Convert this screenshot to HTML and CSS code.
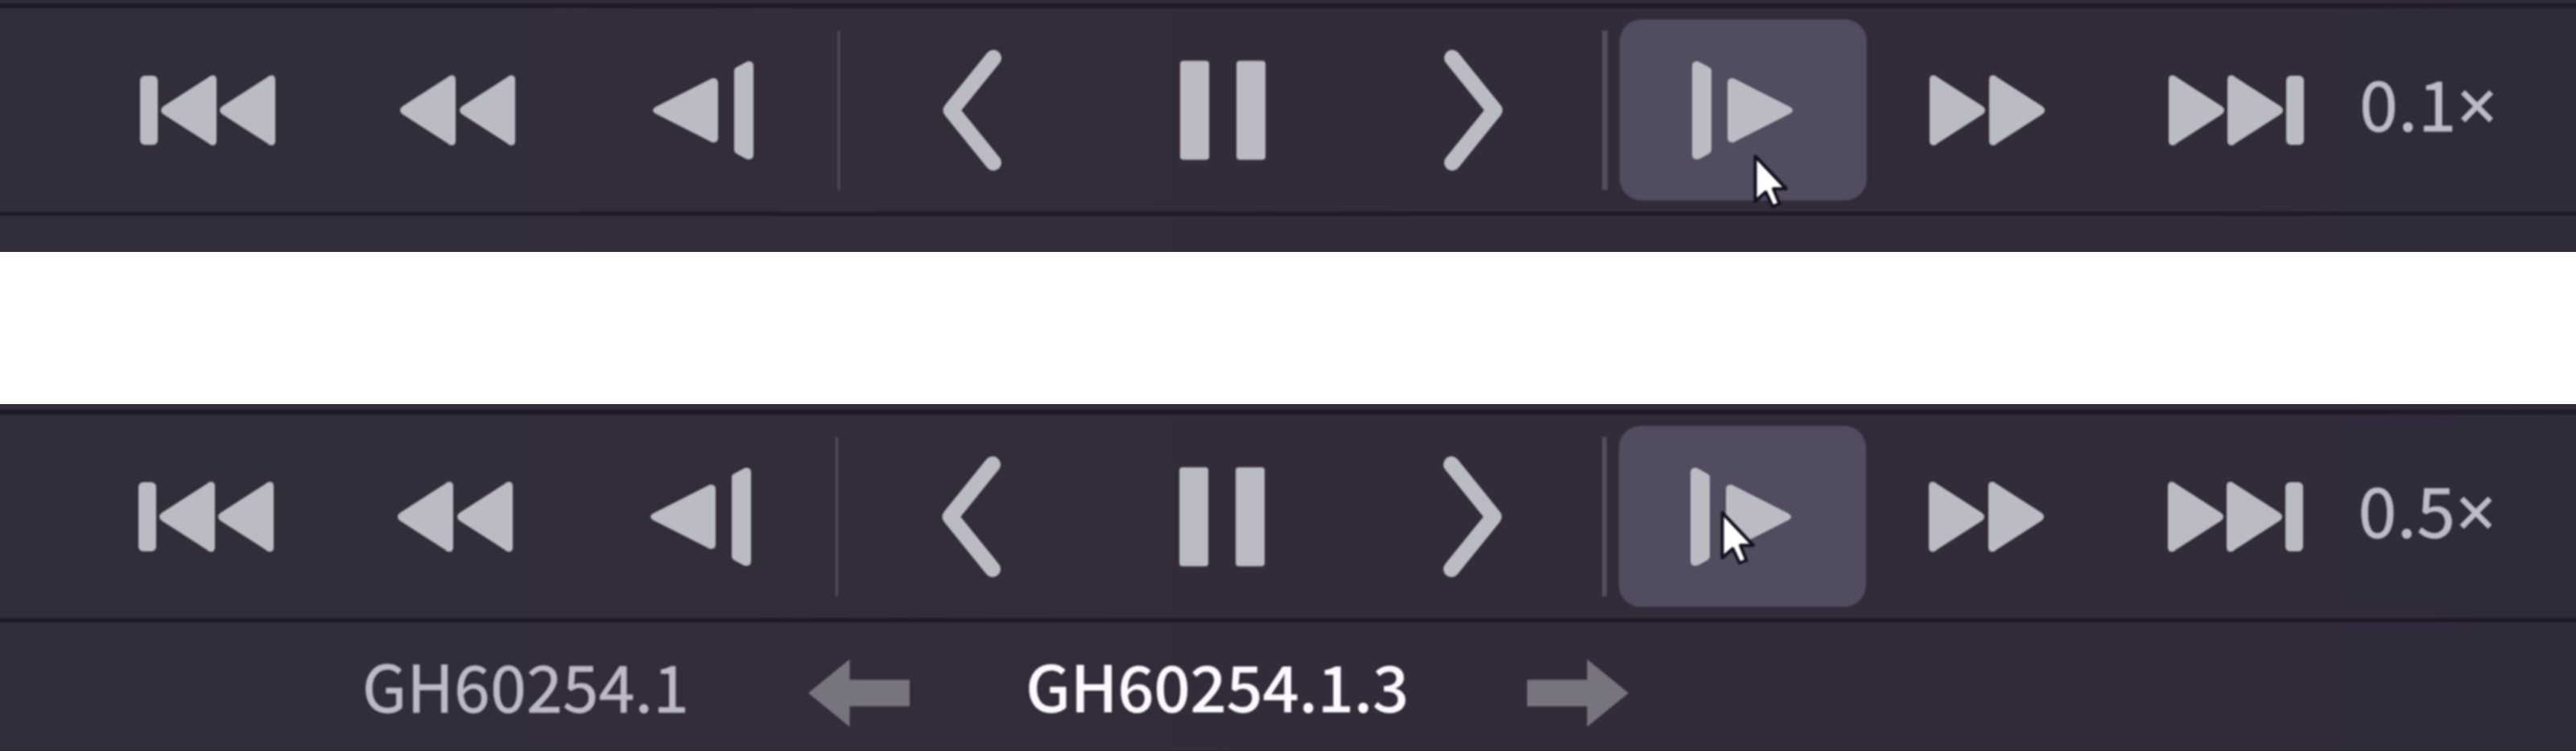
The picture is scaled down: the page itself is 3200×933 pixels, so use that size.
FILE: index.html
```html
<!DOCTYPE html>
<html lang="en">
<head>
<meta charset="utf-8">
<title>Playback controls</title>
<link rel="stylesheet" href="styles.css">
</head>
<body>
<svg class="defs" aria-hidden="true">
  <symbol id="end" viewBox="0 0 168 88">
    <path d="M5 .5Q8 .5 10 3L66 39Q72 44 66 49L10 85Q8 87.500 5 87.500Q0 87.500 0 82V6Q0 .5 5 .5Z"/>
    <path d="M78 .5Q81 .5 83 3L139 39Q145 44 139 49L83 85Q81 87.500 78 87.500Q73 87.500 73 82V6Q73 .5 78 .5Z"/>
    <rect x="146" y="1" width="22" height="86" rx="6"/>
  </symbol>
  <symbol id="ff" viewBox="0 0 144 88">
    <path d="M5 .5Q8 .5 10 3L66 39Q72 44 66 49L10 85Q8 87.500 5 87.500Q0 87.500 0 82V6Q0 .5 5 .5Z"/>
    <path d="M79 .5Q82 .5 84 3L140 39Q146 44 140 49L84 85Q82 87.500 79 87.500Q74 87.500 74 82V6Q74 .5 79 .5Z"/>
  </symbol>
  <symbol id="step" viewBox="0 0 126 124">
    <path d="M6 1Q8 1 10 2.500L21 8.500Q24 10 24 13V111Q24 114 21 116L10 122Q8 123 6 123Q0 123 0 117V7Q0 1 6 1Z"/>
    <path d="M50 22Q52 22 54 23.500L122 58Q128 62 122 66L54 100.500Q52 102 50 102Q44 102 44 96V28Q44 22 50 22Z"/>
  </symbol>
  <symbol id="chevron" viewBox="0 0 74 150"><path d="M10 10 62.500 75 10 140" fill="none" stroke="currentColor" stroke-width="20" stroke-linecap="round" stroke-linejoin="round"/></symbol>
  <symbol id="pause" viewBox="0 0 106 124"><rect y=".5" width="36" height="123" rx="4"/><rect x="70" y=".5" width="36" height="123" rx="4"/></symbol>
  <symbol id="arrow" viewBox="0 0 126 84"><path d="M0 25.500H74.500V0L126 42 74.500 84V58.500H0Z"/></symbol>
  <symbol id="cursor" viewBox="0 0 48 74"><path d="M4.500 6V62L17.500 50.500 26 68.500 34.500 65 27 46.500H43Z" fill="#fff" stroke="#14111f" stroke-width="4" stroke-linejoin="round"/></symbol>
</svg>

<section class="panel panel-a">
  <div class="toolbar">
    <button class="btn start"><svg class="i-end flip"><use href="#end"/></svg></button>
    <button class="btn rewind"><svg class="i-ff flip"><use href="#ff"/></svg></button>
    <button class="btn back"><svg class="i-step flip"><use href="#step"/></svg></button>
    <span class="sep sep-1"></span>
    <button class="btn mid"><svg class="i-chev flip"><use href="#chevron"/></svg></button>
    <button class="btn mid"><svg class="i-pause"><use href="#pause"/></svg></button>
    <button class="btn mid"><svg class="i-chev"><use href="#chevron"/></svg></button>
    <span class="sep sep-2"></span>
    <button class="btn active"><svg class="i-step"><use href="#step"/></svg><svg class="cursor cursor-a"><use href="#cursor"/></svg></button>
    <button class="btn forward"><svg class="i-ff"><use href="#ff"/></svg></button>
    <button class="btn finish"><svg class="i-end"><use href="#end"/></svg></button>
    <span class="speed">0.1<span class="times">×</span></span>
  </div>
</section>

<section class="panel panel-b">
  <div class="toolbar">
    <button class="btn start"><svg class="i-end flip"><use href="#end"/></svg></button>
    <button class="btn rewind"><svg class="i-ff flip"><use href="#ff"/></svg></button>
    <button class="btn back"><svg class="i-step flip"><use href="#step"/></svg></button>
    <span class="sep sep-1"></span>
    <button class="btn mid"><svg class="i-chev flip"><use href="#chevron"/></svg></button>
    <button class="btn mid"><svg class="i-pause"><use href="#pause"/></svg></button>
    <button class="btn mid"><svg class="i-chev"><use href="#chevron"/></svg></button>
    <span class="sep sep-2"></span>
    <button class="btn active"><svg class="i-step"><use href="#step"/></svg><svg class="cursor cursor-b"><use href="#cursor"/></svg></button>
    <button class="btn forward"><svg class="i-ff"><use href="#ff"/></svg></button>
    <button class="btn finish"><svg class="i-end"><use href="#end"/></svg></button>
    <span class="speed">0.5<span class="times">×</span></span>
  </div>
  <div class="crumbs">
    <span class="name parent">GH60254.1</span>
    <svg class="i-arrow flip"><use href="#arrow"/></svg>
    <span class="name current">GH60254.1.3</span>
    <svg class="i-arrow next"><use href="#arrow"/></svg>
  </div>
</section>
</body>
</html>
```

FILE: styles.css
```css
* { box-sizing: border-box; }

body {
  margin: 0;
  width: 3200px;
  height: 933px;
  overflow: hidden;
  display: flex;
  flex-direction: column;
  justify-content: space-between;
  background: #fff;
  font-family: "Noto Sans CJK SC", "Noto Sans", sans-serif;
}

.defs { position: absolute; width: 0; height: 0; }

.panel {
  overflow: hidden;
  background: linear-gradient(90deg, #322d3b 0%, #322d3b 20%, #332c3a 32%, #322b3a 55%, #322b3a 85%, #2f2b3b 100%);
}
.panel-a { height: 313px; padding-top: 4px; }
.panel-b { height: 431px; padding-top: 7px; border-bottom: 1px solid #27222f; }

.toolbar {
  display: flex;
  align-items: center;
  height: 264px;
  margin: 0 -6px;
  padding: 0 0 0 102px;
  border-top: 6px solid #1f1a28;
  border-bottom: 5px solid #1f1a28;
  color: #bbbbc4;
  filter: blur(0.9px);
}
.panel-b .toolbar { padding-left: 99.500px; }

.btn {
  position: relative;
  flex: none;
  display: flex;
  align-items: center;
  justify-content: center;
  height: 225px;
  padding: 0;
  border: 0;
  background: none;
  color: inherit;
}
.btn svg { fill: currentColor; flex: none; }
.start { width: 324px; }
.rewind { width: 295px; }
.back { width: 315px; }
.mid { width: 312px; }
.active { width: 307px; border-radius: 27px; background: #514c5e; }
.forward { width: 300px; }
.finish { width: 300px; margin-left: 9px; }

.sep { flex: none; height: 198px; background: #4a4653; }
.sep-1 { width: 4px; margin: 0 7px 0 10px; }
.sep-2 { width: 7px; margin: 0 15px 0 3px; background: #514d5b; }
.panel-b .sep-1 { width: 3px; margin-right: 9px; background: #53505d; }
.panel-b .sep-2 { margin-left: 4px; width: 6px; }

.i-end { width: 168px; height: 88px; }
.i-ff { width: 144px; height: 88px; }
.i-step { width: 126px; height: 124px; }
.active .i-step { margin-right: 2px; }
.i-chev { width: 74px; height: 150px; }
.i-pause { width: 106px; height: 124px; }
.flip { transform: scaleX(-1); }

.cursor { position: absolute; width: 48px; height: 74px; }
.cursor-a { left: 164px; top: 164px; }
.cursor-b { left: 124px; top: 102px; }

.speed {
  margin-left: 3px;
  padding-bottom: 21px;
  font-size: 86px;
  line-height: 100px;
  letter-spacing: 0.5px;
  white-space: nowrap;
  color: #bebac9;
  -webkit-text-stroke: 0.8px currentColor;
}
.times { font-family: "Noto Sans", sans-serif; font-size: 88px; line-height: 1; }

.crumbs {
  display: flex;
  align-items: center;
  height: 160px;
  padding: 0 0 0 450px;
  color: #bdb9c7;
  filter: blur(0.9px);
}
.name { flex: none; padding-bottom: 7px; font-size: 80px; line-height: 100px; white-space: nowrap; }
.parent { width: 554px; letter-spacing: 0.5px; -webkit-text-stroke: 0.8px currentColor; }
.current { width: 470px; margin-left: 144px; letter-spacing: -0.6px; font-weight: 500; color: #fbf9ff; }
.i-arrow { flex: none; width: 126px; height: 84px; margin-top: 16px; fill: #777480; }
.next { margin-left: 153px; }
```
